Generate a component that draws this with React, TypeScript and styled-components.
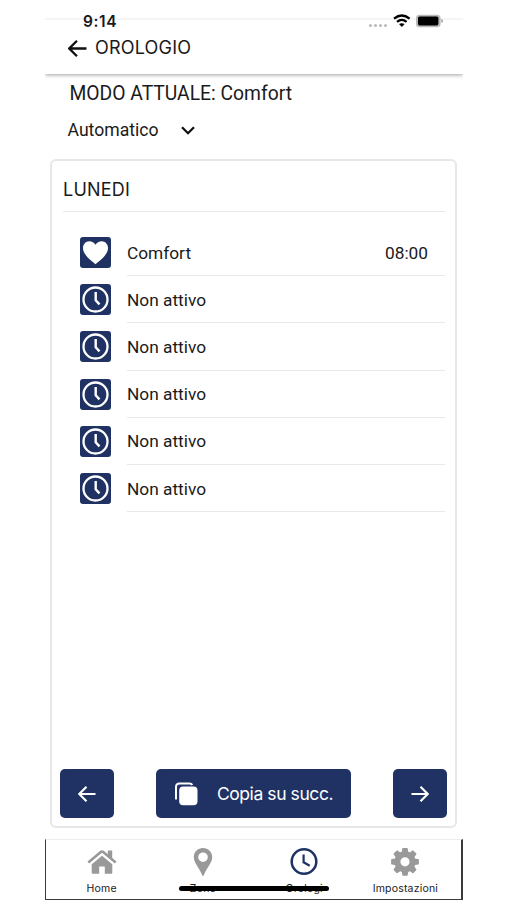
import React from 'react';
import styled, { createGlobalStyle } from 'styled-components';

const NAVY = '#1f3263';
const GREY = '#999999';

const GlobalStyle = createGlobalStyle`
  * { box-sizing: border-box; }
  body { margin: 0; background: #fff; color: #1a1a1a; font-family: Roboto, sans-serif; }
  svg { display: block; flex: none; }
`;

const Phone = styled.div`
  width: 418px;
  height: 900px;
  margin-left: 45px;
  display: flex;
  flex-direction: column;
  overflow: hidden;
`;

const Header = styled.header`
  height: 74px;
  flex: none;
  box-shadow: 0 1px 4px rgba(0, 0, 0, 0.38);
  clip-path: inset(0 0 -8px 0);
  background: linear-gradient(#f5f5f5, #f5f5f5) 0 18px / 100% 2px no-repeat #fff;
`;

const StatusBar = styled.div`
  height: 34px;
  padding: 10px 19px 0 38px;
  display: flex;
  justify-content: space-between;
`;

const Label = styled.span<{ $size: number; $spacing?: number; $inter?: boolean; $weight?: number }>`
  display: block;
  white-space: nowrap;
  font-family: ${(p) => (p.$inter ? 'Inter' : 'Roboto')}, sans-serif;
  font-size: ${(p) => p.$size}px;
  font-weight: ${(p) => p.$weight ?? 400};
  letter-spacing: ${(p) => p.$spacing ?? 0}px;
  line-height: 24px;
`;

const StatusGroup = styled.div`
  margin: -1px 1px 0 0;
`;

const TitleBar = styled.div`
  display: flex;
  align-items: center;
  gap: 8px;
  height: 28px;
  padding-left: 23px;
`;

const ModeTitle = styled.div`
  padding: 8px 0 0 24.5px;
  height: 37px;
`;

const ModeSelect = styled.div`
  display: flex;
  align-items: center;
  gap: 23px;
  height: 38px;
  padding-left: 22.5px;
`;

const Card = styled.main`
  height: 669px;
  margin: 10px 6px 0 5px;
  border: 2px solid #e7e7e7;
  border-radius: 6px;
  padding: 0 8px 8px 8px;
  display: flex;
  flex-direction: column;
`;

const DayTitle = styled.div`
  height: 51px;
  margin: 0 2px 0 3px;
  padding-top: 17px;
  border-bottom: 1.5px solid #e8e8e8;
`;

const Slots = styled.div`
  flex: 1;
  padding: 17px 2px 0 20px;
`;

const Slot = styled.div`
  display: flex;
  height: 47.2px;
  gap: 16px;
`;

const Tile = styled.div`
  width: 31px;
  height: 31px;
  margin-top: 8px;
  border-radius: 3px;
  background: ${NAVY};
  display: flex;
  align-items: center;
  justify-content: center;
`;

const SlotBody = styled.div`
  flex: 1;
  display: flex;
  align-items: center;
  justify-content: space-between;
  padding: 1px 17px 0 0;
  border-bottom: 1px solid #e9e9e9;
`;

const Actions = styled.div`
  display: flex;
  justify-content: space-between;
  height: 49px;
`;

const Button = styled.button<{ $width: number }>`
  width: ${(p) => p.$width}px;
  height: 49px;
  padding: 0;
  border: 0;
  border-radius: 5px;
  background: ${NAVY};
  color: #fff;
  display: flex;
  align-items: center;
  justify-content: center;
  gap: 18px;
`;

const TabBar = styled.nav`
  position: relative;
  margin-top: 11px;
  height: 61px;
  padding: 0 5px;
  display: grid;
  grid-template-columns: repeat(4, 1fr);
  border: solid #3b3b3b;
  border-width: 1px 2px 1px 1px;
  border-top-color: #ececec;
`;

const Tab = styled.div`
  display: flex;
  flex-direction: column;
  align-items: center;
  padding-top: 7px;
`;

const HomeIndicator = styled.div`
  position: absolute;
  left: 133px;
  bottom: 8px;
  width: 150px;
  height: 5px;
  border-radius: 3px;
  background: #000;
`;

const Arrow = ({ right, color = '#fff', size = 18 }: { right?: boolean; color?: string; size?: number }) => (
  <svg width={size} height={size} viewBox="0 0 18 18" fill="none" stroke={color} strokeWidth="2.2">
    <path d={right ? 'M.5 9H16.5M9.5 1.7 16.8 9 9.5 16.3' : 'M17.5 9H1.5M8.5 1.7 1.2 9 8.5 16.3'} />
  </svg>
);

const StatusIcons = () => (
  <svg width="80" height="22" viewBox="0 0 80 22">
    <g fill="#bdbdbd">
      <circle cx="7.5" cy="16.5" r="1.6" />
      <circle cx="12.5" cy="16.5" r="1.6" />
      <circle cx="17.5" cy="16.5" r="1.6" />
      <circle cx="22.5" cy="16.5" r="1.6" />
    </g>
    <g fill="none" stroke="#000" strokeWidth="2.3">
      <path d="M31 9.6Q38.8 3.4 46.6 9.6" />
      <path d="M34 12.8Q38.8 9 43.6 12.8" />
    </g>
    <path d="M36 15.1Q38.8 13.2 41.6 15.1L38.8 18Z" />
    <rect x="53" y="5.7" width="24.6" height="12.6" rx="3.6" fill="#b9b9b9" />
    <path d="M78.3 10Q80 10.5 80 12T78.3 14Z" fill="#9d9d9d" />
    <rect x="55" y="7.6" width="20.4" height="8.8" rx="1.6" />
  </svg>
);

const Clock = () => (
  <svg width="29" height="29" viewBox="0 0 29 29" fill="none" stroke="#fff">
    <circle cx="14.5" cy="14.5" r="12" strokeWidth="2.3" />
    <path d="M14.7 7V15.2L18.5 19.4" strokeWidth="2.4" />
  </svg>
);

const Heart = () => (
  <svg width="27" height="25" viewBox="0 0 27 25" fill="#fff">
    <path d="M13.5 24.2C10 21 1 15.3 1 8.1 1 4 3.8 1.2 7.3 1.2c2.7 0 4.8 1.4 6.2 3.6 1.4-2.2 3.5-3.6 6.2-3.6C23.2 1.2 26 4 26 8.1c0 7.2-9 12.9-12.5 16.1Z" />
  </svg>
);

const Copy = () => (
  <svg width="25" height="24" viewBox="0 0 25 24">
    <path d="M2 17.5V5Q2 1.5 5.5 1.5H15.5Q17.5 1.5 18.3 3" fill="none" stroke="#fff" strokeWidth="2" />
    <rect x="5.2" y="4.5" width="18.3" height="18.7" rx="4" fill="#fff" />
  </svg>
);

const HomeIcon = () => (
  <svg width="30" height="30" viewBox="0 0 30 30" fill={GREY}>
    <path d="M4.7 17.2 15 8.8 25.3 17.2V25.7Q25.3 26.7 24.3 26.7H17.8V19.5H12.2V26.7H5.8Q4.7 26.7 4.7 25.7Z" />
    <path d="M1.3 15.4 13.8 5Q15 4 16.2 5L28.7 15.4" fill="none" stroke={GREY} strokeWidth="2.6" />
    <path d="M20.8 3.5H25.2V12.5L20.8 9Z" />
  </svg>
);

const PinIcon = () => (
  <svg width="30" height="30" viewBox="0 0 30 30">
    <path fill={GREY} fillRule="evenodd" d="M15 1C9.7 1 5.8 5 5.8 10.1 5.8 16 11 20.2 14.2 28.2Q15 29.8 15.8 28.2C19 20.2 24.2 16 24.2 10.1 24.2 5 20.3 1 15 1ZM15 5.4A4.8 4.8 0 1 1 15 15 4.8 4.8 0 0 1 15 5.4Z" />
  </svg>
);

const ClockIcon = () => (
  <svg width="30" height="30" viewBox="0 0 30 30" fill="none" stroke={NAVY}>
    <circle cx="15" cy="14.5" r="12.3" strokeWidth="2.5" />
    <path d="M14.6 7.5V15.3L20.7 18.8" strokeWidth="2.2" />
  </svg>
);

const GearIcon = () => (
  <svg width="30" height="30" viewBox="0 0 30 30">
    <circle cx="15" cy="14.8" r="7.6" fill="none" stroke={GREY} strokeWidth="6" />
    {[0, 45, 90, 135, 180, 225, 270, 315].map((a) => (
      <path key={a} transform={`rotate(${a} 15 14.8)`} fill={GREY} d="M11.6 6 12.3 1.6Q12.4 .9 13.1 .9H16.9Q17.6 .9 17.7 1.6L18.4 6Z" />
    ))}
  </svg>
);

const slots = [
  { name: 'Comfort', time: '08:00', active: true },
  ...Array.from({ length: 5 }, () => ({ name: 'Non attivo', time: '', active: false })),
];

const tabs = [
  { name: 'Home', icon: <HomeIcon /> },
  { name: 'Zone', icon: <PinIcon /> },
  { name: 'Orologi', icon: <ClockIcon /> },
  { name: 'Impostazioni', icon: <GearIcon /> },
];

export default function App() {
  return (
    <>
      <GlobalStyle />
      <Phone>
        <Header>
          <StatusBar>
            <Label $inter $size={15.5} $weight={600} $spacing={0.6}>9:14</Label>
            <StatusGroup>
              <StatusIcons />
            </StatusGroup>
          </StatusBar>
          <TitleBar>
            <Arrow color="#111" size={19} />
            <Label $inter $size={18} $spacing={0.2}>OROLOGIO</Label>
          </TitleBar>
        </Header>
        <ModeTitle>
          <Label $size={19.3}>MODO ATTUALE: Comfort</Label>
        </ModeTitle>
        <ModeSelect>
          <Label $size={17.6}>Automatico</Label>
          <svg width="14" height="9" viewBox="0 0 14 9" fill="none" stroke="#111" strokeWidth="2.3">
            <path d="M1 1.2 7 7.2 13 1.2" />
          </svg>
        </ModeSelect>
        <Card>
          <DayTitle>
            <Label $inter $size={18} $spacing={0.2}>LUNEDI</Label>
          </DayTitle>
          <Slots>
            {slots.map((slot, i) => (
              <Slot key={i}>
                <Tile>{slot.active ? <Heart /> : <Clock />}</Tile>
                <SlotBody>
                  <Label $size={17.3}>{slot.name}</Label>
                  <Label $size={17.3}>{slot.time}</Label>
                </SlotBody>
              </Slot>
            ))}
          </Slots>
          <Actions>
            <Button $width={54}><Arrow /></Button>
            <Button $width={195}>
              <Copy />
              <Label $inter $size={17.5} $spacing={-0.42}>Copia su succ.</Label>
            </Button>
            <Button $width={54}><Arrow right /></Button>
          </Actions>
        </Card>
        <TabBar>
          {tabs.map((tab) => (
            <Tab key={tab.name}>
              {tab.icon}
              <Label $inter $size={10.5} $spacing={0.2}>{tab.name}</Label>
            </Tab>
          ))}
          <HomeIndicator />
        </TabBar>
      </Phone>
    </>
  );
}
